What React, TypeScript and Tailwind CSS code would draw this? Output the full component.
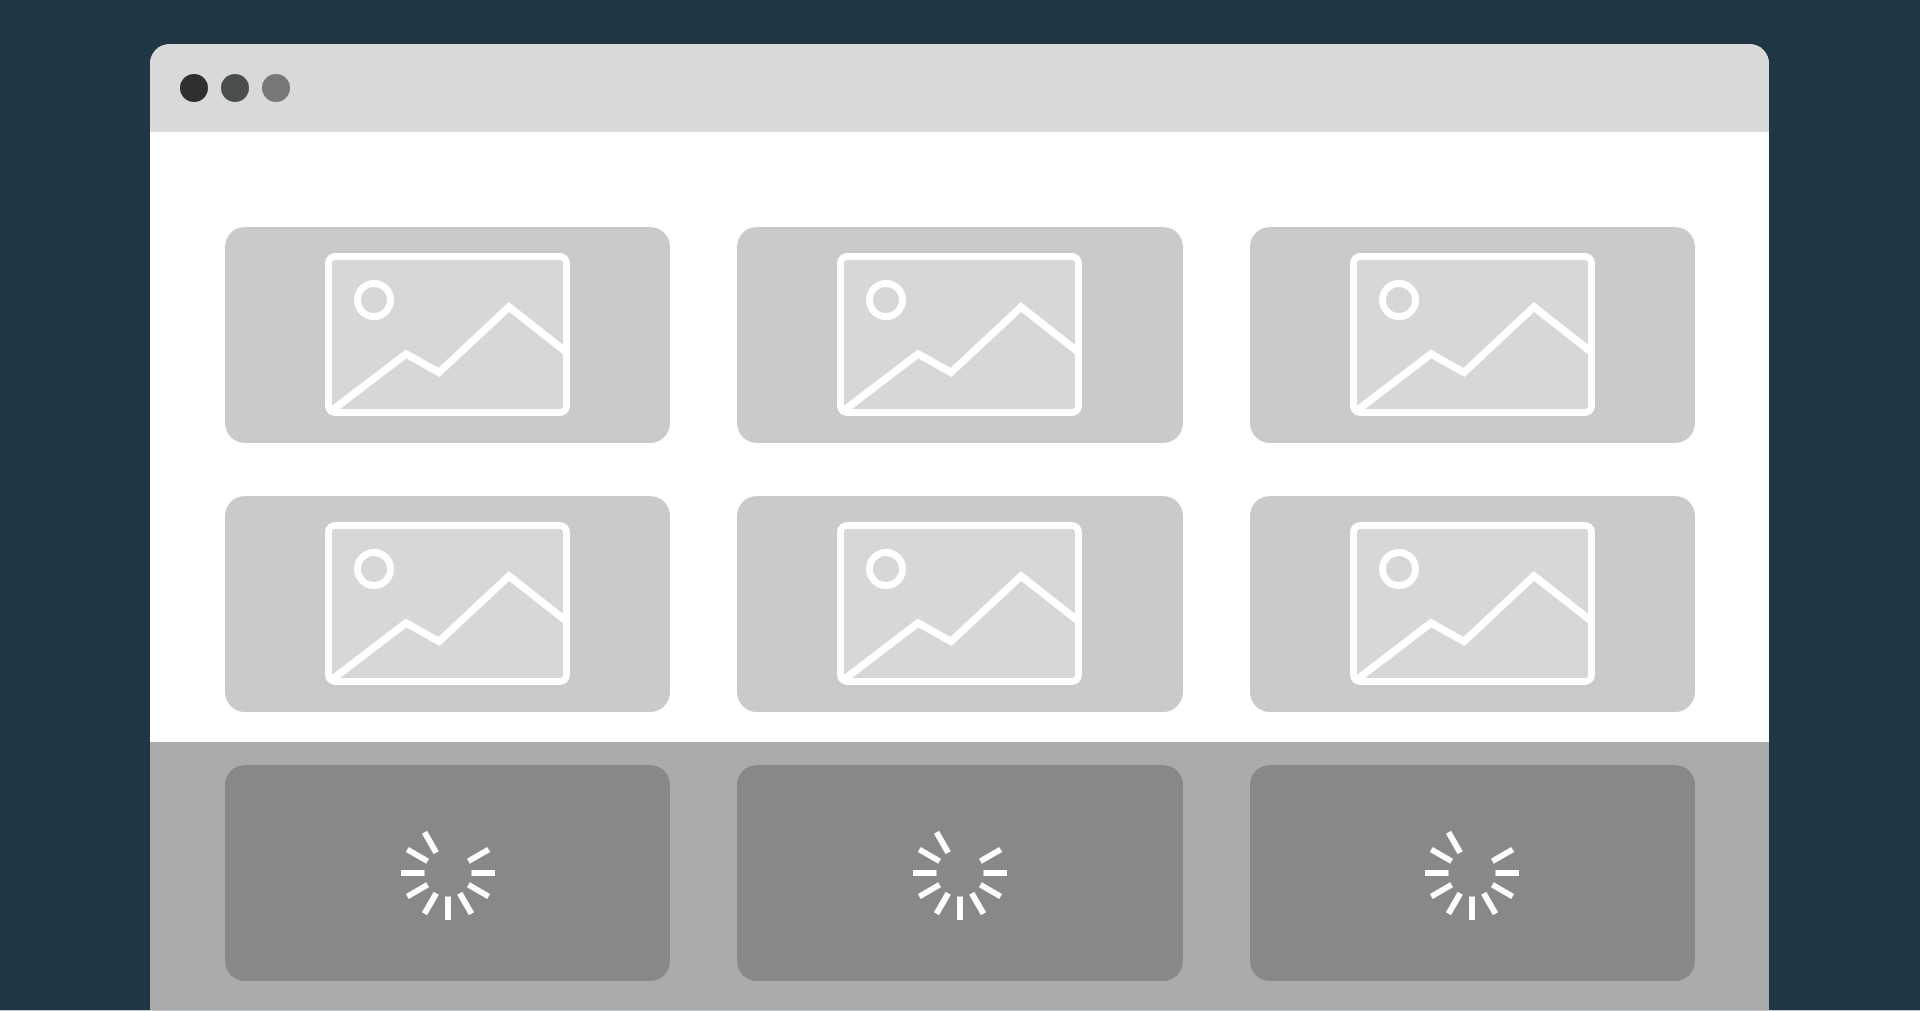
import React from "react";

const SPOKES = [0, 30, 60, 90, 120, 150, 180, 210, 240, 330];
const COLUMNS = [0, 1, 2];
const LOADED = [0, 1, 2, 3, 4, 5];

function PictureIcon() {
  return (
    <svg width="245" height="164" viewBox="0 0 245 164" fill="none" stroke="#ffffff" strokeWidth="7" aria-hidden="true">
      <rect x="3.5" y="3.5" width="238" height="156" rx="6.5" fill="#d7d7d7" />
      <circle cx="49" cy="47" r="16.5" />
      <path d="M5 159 L81 101 L114 119.5 L184 54 L240 98" strokeWidth="7.5" />
    </svg>
  );
}

function SpinnerIcon() {
  return (
    <svg width="96" height="96" viewBox="-48 -48 96 96" stroke="#ffffff" strokeWidth="6" aria-hidden="true">
      {SPOKES.map((angle) => (
        <line key={angle} x1="23.5" y1="0" x2="47" y2="0" transform={`rotate(${angle})`} />
      ))}
    </svg>
  );
}

export default function App() {
  return (
    <div className="flex min-h-screen flex-col border-b border-[#c3c9cc] bg-[#1f3644] pr-[151px] pl-[150px] pt-11">
      <main className="flex grow flex-col overflow-hidden rounded-t-[20px] bg-white">
        <header className="flex h-[88px] items-center gap-[13px] bg-[#d9d9d9] px-[30px]">
          <span className="size-7 rounded-full bg-[#2d2f30]" />
          <span className="size-7 rounded-full bg-[#4a4d4e]" />
          <span className="size-7 rounded-full bg-[#757778]" />
        </header>

        <section className="grid grid-cols-3 gap-x-[67px] gap-y-[53px] pr-[74px] pl-[75px] pt-[95px] pb-[30px]">
          {LOADED.map((i) => (
            <div key={i} className="flex h-[216px] items-center justify-center rounded-[20px] bg-[#cacaca]">
              <PictureIcon />
            </div>
          ))}
        </section>

        <section className="grid grow grid-cols-3 content-start gap-x-[67px] bg-[#ababab] pr-[74px] pl-[75px] pt-[23px] pb-[29px]">
          {COLUMNS.map((i) => (
            <div key={i} role="status" aria-label="Loading" className="flex h-[216px] items-center justify-center rounded-[20px] bg-[#888888]">
              <SpinnerIcon />
            </div>
          ))}
        </section>
      </main>
    </div>
  );
}
